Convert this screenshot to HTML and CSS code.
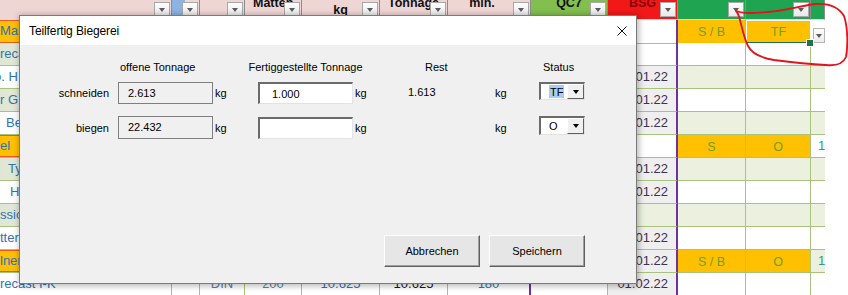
FILE: index.html
```html
<!DOCTYPE html>
<html>
<head>
<meta charset="utf-8">
<title>Teilfertig Biegerei</title>
<link rel="stylesheet" href="styles.css">
</head>
<body>
<div class="sheet">
  <div class="row head">
    <div class="c hc pink"><span class="dd"></span></div>
    <div class="c hc pinkblue"><span class="dd"></span></div>
    <div class="c hc pink"><span class="dd"></span></div>
    <div class="c hc pink"><span class="hl hl-left">Matten</span><span class="dd"></span></div>
    <div class="c hc pink"><span class="hl low">kg</span><span class="dd"></span></div>
    <div class="c hc pink"><span class="hl">Tonnage</span><span class="dd"></span></div>
    <div class="c hc pink purple-r"><span class="hl hl-shift">min.</span><span class="dd"></span></div>
    <div class="c hc qc"><span class="hl">QC7</span><span class="dd"></span></div>
    <div class="c hc bsg"><span class="hl">BSG</span><span class="dd"></span></div>
    <div class="c hc grn"><span class="dd"></span></div>
    <div class="c hc grn"><span class="dd"></span></div>
    <div class="c hc grn"></div>
    <div class="c hc blank"></div>
  </div>

  <div class="row">
    <div class="c a ao">Mast</div><div class="c"></div><div class="c"></div><div class="c"></div><div class="c"></div><div class="c"></div><div class="c purple-r"></div><div class="c"></div>
    <div class="c i"></div>
    <div class="c o tx">S / B</div>
    <div class="c o tx sel">TF</div>
    <div class="c l w"><span class="vd"></span></div>
    <div class="c blank"></div>
  </div>

  <div class="row">
    <div class="c a g">recast</div><div class="c"></div><div class="c"></div><div class="c"></div><div class="c"></div><div class="c"></div><div class="c purple-r"></div><div class="c"></div>
    <div class="c i"></div>
    <div class="c w"></div><div class="c w"></div><div class="c l w"></div><div class="c blank"></div>
  </div>

  <div class="row">
    <div class="c a w n6">o. H</div><div class="c"></div><div class="c"></div><div class="c"></div><div class="c"></div><div class="c"></div><div class="c purple-r"></div><div class="c"></div>
    <div class="c i d">28.01.22</div>
    <div class="c g"></div><div class="c g"></div><div class="c l g"></div><div class="c blank"></div>
  </div>

  <div class="row">
    <div class="c a g">r G</div><div class="c"></div><div class="c"></div><div class="c"></div><div class="c"></div><div class="c"></div><div class="c purple-r"></div><div class="c"></div>
    <div class="c i d">28.01.22</div>
    <div class="c w"></div><div class="c w"></div><div class="c l w"></div><div class="c blank"></div>
  </div>

  <div class="row">
    <div class="c a w p6">Bet</div><div class="c"></div><div class="c"></div><div class="c"></div><div class="c"></div><div class="c"></div><div class="c purple-r"></div><div class="c"></div>
    <div class="c i d">28.01.22</div>
    <div class="c g"></div><div class="c g"></div><div class="c l g"></div><div class="c blank"></div>
  </div>

  <div class="row">
    <div class="c a ao">el</div><div class="c"></div><div class="c"></div><div class="c"></div><div class="c"></div><div class="c"></div><div class="c purple-r"></div><div class="c"></div>
    <div class="c i w"></div>
    <div class="c o tx">S</div><div class="c o tx">O</div><div class="c l w teal">1</div><div class="c blank"></div>
  </div>

  <div class="row">
    <div class="c a g p8">Typ</div><div class="c"></div><div class="c"></div><div class="c"></div><div class="c"></div><div class="c"></div><div class="c purple-r"></div><div class="c"></div>
    <div class="c i d">31.01.22</div>
    <div class="c g"></div><div class="c g"></div><div class="c l g"></div><div class="c blank"></div>
  </div>

  <div class="row">
    <div class="c a w p10">Ha</div><div class="c"></div><div class="c"></div><div class="c"></div><div class="c"></div><div class="c"></div><div class="c purple-r"></div><div class="c"></div>
    <div class="c i d">31.01.22</div>
    <div class="c w"></div><div class="c w"></div><div class="c l w"></div><div class="c blank"></div>
  </div>

  <div class="row">
    <div class="c a g">ssio</div><div class="c"></div><div class="c"></div><div class="c"></div><div class="c"></div><div class="c"></div><div class="c purple-r"></div><div class="c"></div>
    <div class="c i g"></div>
    <div class="c g"></div><div class="c g"></div><div class="c l g"></div><div class="c blank"></div>
  </div>

  <div class="row">
    <div class="c a w">tter</div><div class="c"></div><div class="c"></div><div class="c"></div><div class="c"></div><div class="c"></div><div class="c purple-r"></div><div class="c"></div>
    <div class="c i d">31.01.22</div>
    <div class="c w"></div><div class="c w"></div><div class="c l w"></div><div class="c blank"></div>
  </div>

  <div class="row">
    <div class="c a ao">lner</div><div class="c"></div><div class="c"></div><div class="c"></div><div class="c"></div><div class="c"></div><div class="c purple-r"></div><div class="c"></div>
    <div class="c i d">31.01.22</div>
    <div class="c o tx">S / B</div><div class="c o tx">O</div><div class="c l g teal">1</div><div class="c blank"></div>
  </div>

  <div class="row">
    <div class="c a w">recast I-K</div><div class="c"></div><div class="c ctr din">DIN</div><div class="c ctr din">200</div><div class="c ctr blu">10.625</div><div class="c ctr blk">10.625</div><div class="c ctr blu purple-r">180</div><div class="c"></div>
    <div class="c i d">01.02.22</div>
    <div class="c w"></div><div class="c w"></div><div class="c l w"></div><div class="c blank"></div>
  </div>
</div>

<div class="dlg">
  <div class="dlg-title">
    <span class="ttl">Teilfertig Biegerei</span>
    <svg class="xbtn" width="10" height="10" viewBox="0 0 10 10"><path d="M0.5 0.5 L9.5 9.5 M9.5 0.5 L0.5 9.5" stroke="#111" stroke-width="1" fill="none"/></svg>
  </div>
  <div class="dlg-body">
    <div class="form">
      <div></div>
      <div class="th th-open">offene Tonnage</div>
      <div></div>
      <div class="th th-done">Fertiggestellte Tonnage</div>
      <div></div>
      <div class="th th-rest">Rest</div>
      <div></div>
      <div class="th th-stat">Status</div>

      <div class="lbl">schneiden</div>
      <div class="box ro">2.613</div>
      <div class="unit">kg</div>
      <div class="box ed">1.000</div>
      <div class="unit">kg</div>
      <div class="rest">1.613</div>
      <div class="unit u2">kg</div>
      <div class="combo"><span class="cv"><span class="hi">TF</span></span><span class="cb"></span></div>

      <div class="lbl">biegen</div>
      <div class="box ro">22.432</div>
      <div class="unit">kg</div>
      <div class="box ed"></div>
      <div class="unit">kg</div>
      <div class="rest"></div>
      <div class="unit u2">kg</div>
      <div class="combo"><span class="cv">O</span><span class="cb"></span></div>
    </div>
    <div class="btns">
      <button class="btn">Abbrechen</button>
      <button class="btn">Speichern</button>
    </div>
  </div>
</div>

<svg class="annot" width="848" height="80" viewBox="0 0 848 80">
  <path d="M736 11 C744 14 754 13 768 12 C785 11 800 6 815 4 C828 3 838 6 844 16 C848 28 848 46 846 57 C843 64 836 66 826 65 C808 64 790 62 774 60 C762 58 752 54 748 46 C744 38 742 28 740 20 C739 16 738 13 736 11" stroke="#e0141c" stroke-width="1.8" fill="none" stroke-linecap="round"/>
</svg>
</body>
</html>
```

FILE: styles.css
```css
* { box-sizing: border-box; margin: 0; padding: 0; }
html, body { width: 848px; height: 295px; overflow: hidden; }
body {
  position: relative;
  background: #fff;
  font-family: "Liberation Sans", Arial, sans-serif;
}

/* ---------- spreadsheet ---------- */
.sheet { display: flex; flex-direction: column; width: 848px; }
.row {
  display: grid;
  grid-template-columns: 172px 28px 45px 57px 78px 68px 83px 77px 70px 68px 65px 14px 1fr;
  height: 23px;
}
.row.head { height: 20px; }

.c {
  border-right: 1px solid #a9c37d;
  border-bottom: 1px solid #a9c37d;
  overflow: hidden;
  white-space: nowrap;
  font-size: 13px;
  line-height: 22px;
  color: #222;
}
.c.blank { border: none; background: #fff; }
.purple-r { border-right: 2px solid #7030a0; }
.c.i { border-right: 2px solid #7030a0; }

/* header */
.hc {
  display: grid;
  grid-template: 1fr / 1fr;
  border-right: 1px solid #8d8d8d;
  border-bottom: 1px solid #dcdcdc;
}
.hc.purple-r { border-right: 1px solid #8d8d8d; }
.pink { background: #eed6d5; }
.pinkblue { background: linear-gradient(to right, #8db3e2 13px, #eed6d5 13px); }
.qc { background: #82bf4e; }
.bsg { background: #f21818; color: #9c0006; }
.grn { background: #1fa552; }
.hc.blank { background: #fff; border: none; }
.hl {
  grid-area: 1 / 1;
  justify-self: center;
  align-self: start;
  font-weight: bold;
  font-size: 12.5px;
  line-height: 14px;
  margin-top: -4px;
  color: #111;
}
.hl-left { justify-self: start; margin-left: 8px; }
.hl-shift { margin-right: 14px; }
.bsg .hl { color: #8a0000; }
.hl.low { margin-top: 3px; }
.dd {
  grid-area: 1 / 1;
  justify-self: end;
  align-self: start;
  margin: 2px 1px 0 0;
  width: 16px;
  height: 15px;
  background: linear-gradient(#fdfdfd, #e9e9e9);
  border: 1px solid #a8a8a8;
  display: flex;
  align-items: center;
  justify-content: center;
}
.dd::after, .vd::after {
  content: "";
  border-left: 3.5px solid transparent;
  border-right: 3.5px solid transparent;
  border-top: 4px solid #5b5b5b;
  margin-top: 1px;
}

/* body cells */
.a { color: #2e74b5; padding-left: 0; }
.a.g { background: linear-gradient(to right, #dfe6d3, #f3f6ee); }
.a.w { background: #fff; }
.a.ao { background: #fec000; box-shadow: inset 0 1px 0 #ec5a1e, inset 0 -1px 0 #ec5a1e; }
.p6 { padding-left: 6px; }
.p8 { padding-left: 8px; }
.p10 { padding-left: 10px; }
.n6 { text-indent: -6px; }
.w { background: #fff; }
.g { background: #ebf1de; }
.o { background: #ffc000; }
.d { background: #efefef; }
.i { text-align: right; padding-right: 8px; color: #3f3152; }
.tx { text-align: center; color: #6ea12a; font-size: 12.5px; line-height: 24px; }
.teal { color: #2e9c8c; padding-left: 7px; }
.l { border-right: none; }
.ctr { text-align: center; }
.din { color: #5f80a8; }
.blu { color: #3474b8; }
.blk { color: #1a1a1a; }

.sel {
  position: relative;
  overflow: visible;
  border: none;
  box-shadow: inset 0 0 0 1px #fff, inset 0 -2px 0 #217346, inset -1px 0 0 #217346, inset 1px 0 0 #cfe0c0;
}
.sel::after {
  content: "";
  position: absolute;
  right: -3px;
  bottom: -3px;
  width: 6px;
  height: 6px;
  background: #217346;
  border: 1px solid #fff;
}
.c.l:has(.vd) { display: flex; align-items: flex-end; justify-content: flex-end; border-bottom: none; }
.vd {
  width: 12px;
  height: 15px;
  margin-bottom: 1px;
  background: linear-gradient(#fdfdfd, #ececec);
  border: 1px solid #b5b5b5;
  display: flex;
  align-items: center;
  justify-content: center;
}

/* ---------- dialog ---------- */
.dlg {
  position: absolute;
  left: 19px;
  top: 15px;
  width: 618px;
  height: 269px;
  border: 1px solid #7a7a7a;
  background: #f0f0f0;
  box-shadow: 1px 1px 6px 1px rgba(0, 0, 0, 0.28);
  display: flex;
  flex-direction: column;
  font-family: "Liberation Sans", Arial, sans-serif;
  font-size: 11px;
  color: #000;
}
.dlg-title {
  height: 29px;
  background: #fff;
  display: flex;
  align-items: center;
  justify-content: space-between;
  padding: 0 9px 0 9px;
}
.ttl { font-size: 12px; letter-spacing: -0.1px; }
.xbtn { display: block; }

.dlg-body { flex: 1; display: flex; flex-direction: column; }
.form {
  display: grid;
  grid-template-columns: 98px 95px 45px 95px 55px 87px 44px 46px;
  grid-template-rows: 16px 29px 35px;
  padding-top: 14px;
}
.th { align-self: center; white-space: nowrap; line-height: 14px; }
.th-open { padding-left: 2px; }
.th-done { justify-self: center; }
.th-rest { padding-left: 17px; }
.th-stat { padding-left: 4px; }

.lbl { text-align: right; padding-right: 9px; align-self: end; line-height: 22px; }
.unit { padding-left: 2px; align-self: end; line-height: 22px; padding-top: 2px; }
.u2 { padding-left: 0; }
.rest { align-self: end; line-height: 16px; height: 22px; padding-top: 2px; }

.box {
  align-self: end;
  height: 22px;
  line-height: 16px;
  padding-top: 2px;
}
.form > .box:nth-child(18) { height: 23px; }
.ro {
  border: 1px solid #7f7f7f;
  background: #f0f0f0;
  padding-left: 9px;
}
.ed {
  background: #fff;
  border-style: solid;
  border-width: 2px 1px 1px 2px;
  border-color: #6b6b6b #e3e3e3 #e3e3e3 #6b6b6b;
  padding-left: 12px;
}

.combo {
  align-self: end;
  margin-bottom: 4px;
  height: 18px;
  background: #fff;
  border-style: solid;
  border-width: 2px 1px 1px 2px;
  border-color: #6b6b6b #e3e3e3 #e3e3e3 #6b6b6b;
  display: flex;
}
.form > .combo:last-child { height: 19px; }
.cv { flex: 1; padding-left: 8px; line-height: 14px; padding-top: 1px; }
.hi { background: #a9cdf1; padding: 1px 1px 0; }
.cb {
  width: 17px;
  background: #f0f0f0;
  border-style: solid;
  border-width: 1px;
  border-color: #fff #5f5f5f #5f5f5f #fff;
  display: flex;
  align-items: center;
  justify-content: center;
}
.cb::after {
  content: "";
  border-left: 3.5px solid transparent;
  border-right: 3.5px solid transparent;
  border-top: 4px solid #000;
}

.btns {
  display: flex;
  justify-content: flex-end;
  gap: 9px;
  margin-top: 96px;
  padding-right: 51px;
}
.btn {
  width: 96px;
  height: 32px;
  font-family: "Liberation Sans", Arial, sans-serif;
  font-size: 11px;
  color: #000;
  background: #e6e6e6;
  border-style: solid;
  border-width: 1px;
  border-color: #fdfdfd #606060 #606060 #fdfdfd;
  box-shadow: inset -1px -1px 0 #a0a0a0;
}

.annot { position: absolute; left: 0; top: 0; pointer-events: none; }
```
